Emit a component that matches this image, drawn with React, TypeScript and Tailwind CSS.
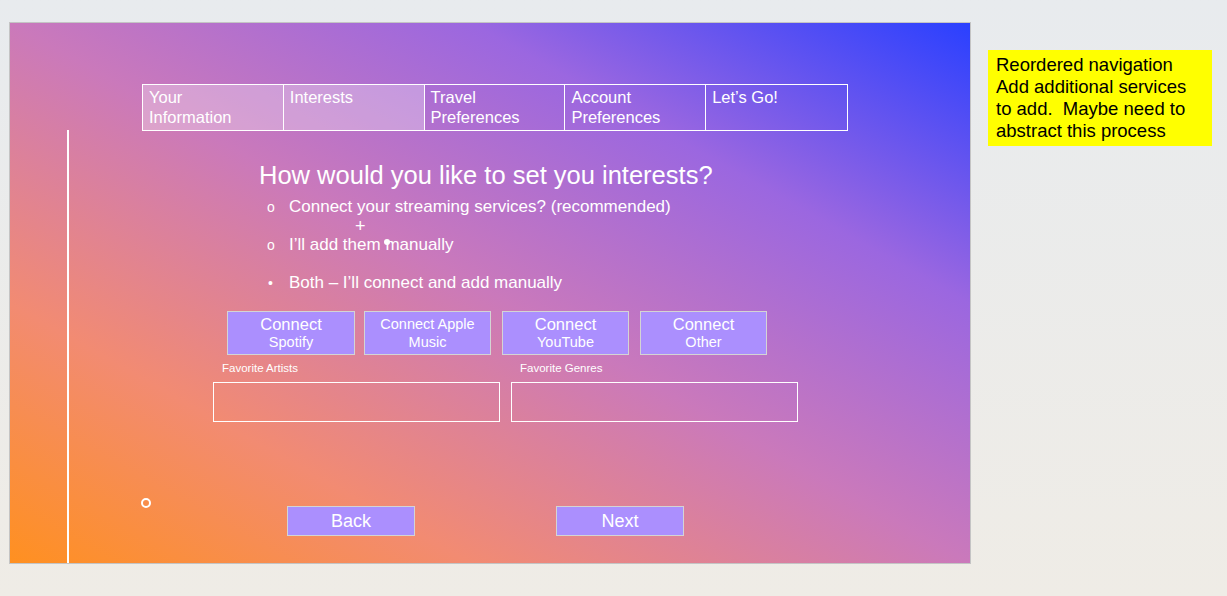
const tabs = [
  { lines: ['Your', 'Information'], done: true },
  { lines: ['Interests'], done: true },
  { lines: ['Travel', 'Preferences'], done: false },
  { lines: ['Account', 'Preferences'], done: false },
  { lines: ['Let’s Go!'], done: false },
]

const services = [
  { top: 'Connect', bottom: 'Spotify', big: true, gap: '' },
  { top: 'Connect Apple', bottom: 'Music', big: false, gap: 'ml-[9px]' },
  { top: 'Connect', bottom: 'YouTube', big: true, gap: 'ml-[11px]' },
  { top: 'Connect', bottom: 'Other', big: true, gap: 'ml-[11px]' },
]

export default function App() {
  return (
    <div
      className="h-[596px] w-full bg-linear-to-b from-[#e8ebee] to-[#efece6] flex items-start"
      style={{ fontFamily: '"Liberation Sans", Arial, sans-serif' }}
    >
      {/* Slide */}
      <div className="relative ml-[9px] mt-[22px] w-[962px] h-[542px] border border-[#c4c4c4] bg-[linear-gradient(to_top_right,#ff9020_0%,#f28b72_24%,#ca79bb_50%,#9b67e0_74%,#2a40ff_100%)] pt-[61px] text-white">
        {/* decorative line + circle */}
        <div className="absolute left-[57px] top-[107px] bottom-0 w-[2px] bg-white" />
        <div className="absolute left-[131px] top-[475px] w-[10px] h-[10px] rounded-full border-2 border-white" />

        {/* Navigation */}
        <div className="ml-[132px] w-[706px] h-[47px] grid grid-cols-5 border border-white">
          {tabs.map((t, i) => (
            <div
              key={t.lines.join(' ')}
              className={`px-[6px] pt-[2px] text-[16.5px] leading-[20px] ${i < 4 ? 'border-r border-white' : ''} ${t.done ? 'bg-white/30' : ''}`}
            >
              {t.lines.map((l) => (
                <div key={l}>{l}</div>
              ))}
            </div>
          ))}
        </div>

        {/* Heading */}
        <h1 className="ml-[249px] mt-[29px] text-[25.5px] leading-[30px]">How would you like to set you interests?</h1>

        {/* Options */}
        <div className="relative ml-[257px] mt-[7px] text-[17px] leading-[20px]">
          <div className="flex items-center">
            <span className="w-[22px] text-[14px]">o</span>
            <span>Connect your streaming services? (recommended)</span>
          </div>
          <div className="flex items-center mt-[18px]">
            <span className="w-[22px] text-[14px]">o</span>
            <span>I’ll add them manually</span>
          </div>
          <div className="flex items-center mt-[18px]">
            <span className="w-[22px] text-[14px] pl-[1px]">•</span>
            <span>Both – I’ll connect and add manually</span>
          </div>
          <span className="absolute left-[88px] top-[22px] text-[18px] leading-[14px]">+</span>
          <span className="absolute left-[117px] top-[42px] w-[6px] h-[6px] rounded-full bg-white" />
        </div>

        {/* Service buttons */}
        <div className="ml-[217px] mt-[18px] flex">
          {services.map((s, i) => (
            <div
              key={s.bottom}
              className={`${i === 0 ? 'w-[128px]' : 'w-[127px]'} ${s.gap} h-[44px] bg-[#ab8ffe] border border-[#d4d4d4] flex flex-col items-center justify-center leading-[18px]`}
            >
              <span className={s.big ? 'text-[16.5px]' : 'text-[14.5px]'}>{s.top}</span>
              <span className="text-[14.5px]">{s.bottom}</span>
            </div>
          ))}
        </div>

        {/* Favorites */}
        <div className="ml-[203px] mt-[6px] flex gap-[11px]">
          {['Favorite Artists', 'Favorite Genres'].map((l) => (
            <div key={l} className="w-[287px]">
              <div className="pl-[9px] text-[11.5px] leading-[14px]">{l}</div>
              <div className="mt-[7px] h-[40px] border border-white" />
            </div>
          ))}
        </div>

        {/* Back / Next */}
        <div className="ml-[277px] mt-[84px] flex gap-[141px]">
          {['Back', 'Next'].map((b) => (
            <div
              key={b}
              className="w-[128px] h-[30px] bg-[#ab8ffe] border border-[#d4d4d4] flex items-center justify-center text-[18px]"
            >
              {b}
            </div>
          ))}
        </div>
      </div>

      {/* Note */}
      <div className="ml-[17px] mt-[50px] w-[224px] h-[96px] bg-[#ffff00] px-[8px] pt-[4px] text-[18.5px] leading-[22px] text-black whitespace-nowrap">
        Reordered navigation
        <br />
        Add additional services
        <br />
        to add.&nbsp; Maybe need to
        <br />
        abstract this process
      </div>
    </div>
  )
}
